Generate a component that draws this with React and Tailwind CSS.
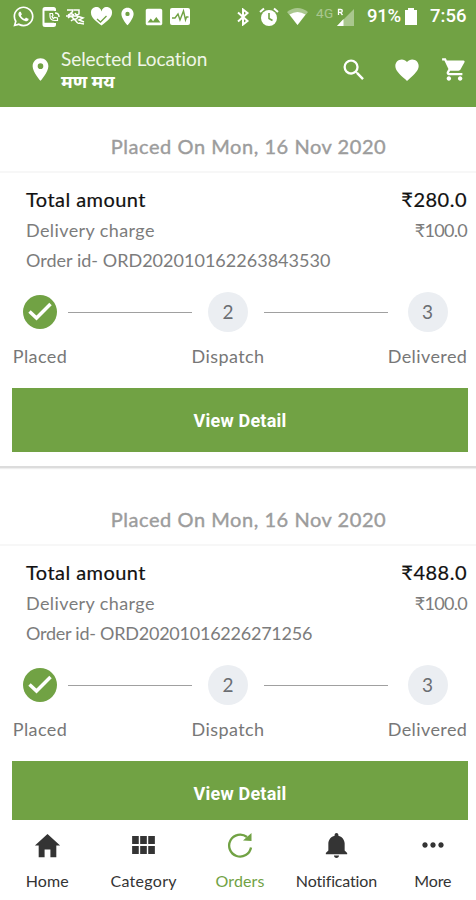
import { Fragment } from "react";
import { FaWhatsapp } from "react-icons/fa";
import { IoMdHome, IoMdNotifications } from "react-icons/io";
import {
  MdFavorite,
  MdImage,
  MdLocationOn,
  MdMoreHoriz,
  MdSearch,
  MdShoppingCart,
} from "react-icons/md";

const orders = [
  {
    id: "ORD202010162263843530",
    date: "Mon, 16 Nov 2020",
    total: "280.0",
    delivery: "100.0",
    idTracking: "tracking-[0.02px]",
  },
  {
    id: "ORD20201016226271256",
    date: "Mon, 16 Nov 2020",
    total: "488.0",
    delivery: "100.0",
    idTracking: "tracking-[-0.24px]",
  },
];

const steps = [
  { label: "Placed", width: "w-[56px]" },
  { label: "Dispatch", width: "w-[72px]" },
  { label: "Delivered", width: "w-[79px]" },
];

const GridIcon = () => (
  <svg width="23" height="18" viewBox="0 0 24 19" fill="currentColor">
    <path d="M0 0h7v8.500H0zM8.500 0h7v8.500h-7zM17 0h7v8.500h-7zM0 10.500h7V19H0zM8.500 10.500h7V19h-7zM17 10.500h7V19h-7z" />
  </svg>
);

const RefreshIcon = () => (
  <svg width="26" height="26" viewBox="0 0 26 26" fill="none">
    <path d="M24 15.500A11 11 0 1 1 20 5" stroke="currentColor" strokeWidth="2.300" />
    <path d="M24.500 1v8l-8.500-.5z" fill="currentColor" />
  </svg>
);

const tabs = [
  { label: "Home", icon: <IoMdHome size={31} />, tracking: "tracking-[0.1px]" },
  { label: "Category", icon: <GridIcon />, tracking: "tracking-[0.3px]" },
  { label: "Orders", icon: <RefreshIcon />, active: true, tracking: "tracking-[0.1px]" },
  { label: "Notification", icon: <IoMdNotifications size={31} />, tracking: "tracking-[-0.15px]" },
  { label: "More", icon: <MdMoreHoriz size={32} />, tracking: "tracking-[-0.1px]" },
];

const StatusBar = () => (
  <div className="flex items-center h-[33px] pl-[12px] pr-[9px] text-white font-[Roboto,sans-serif]">
    <FaWhatsapp size={23} />
    <svg className="ml-[7px]" width="18" height="20" viewBox="0 0 18 20" fill="none" stroke="currentColor">
      <path d="M13 4V2.5Q13 1 11.500 1H3Q1.500 1 1.500 2.500v15Q1.500 19 3 19h8.500Q13 19 13 17.500V16" strokeWidth="2" />
      <path d="M2 2.500h10M2 17h10" strokeWidth="2.500" />
      <path d="M8 6.500v2.500q0 4.500 5 4.500h2.500v-2.500l-3-.5-1 1q-1-.5-1.500-2l1-1-.5-2z" strokeWidth="1.200" />
      <path d="M13 6q4 0 4 4" strokeWidth="1.500" />
    </svg>
    <svg className="ml-[5px]" width="21" height="18" viewBox="0 0 21 18" fill="none" stroke="currentColor" strokeWidth="1.500">
      <path d="M2 2h6q-1 4-5 5M5 5l4 2M9 2h5v4q-3 2-4-1M1 8h12M3 10q3-3 5 0t5-1M12 8l6 2-4 2 5 2M6 13q3-3 5 0t3 2M14 15l5 1" />
    </svg>
    <svg className="ml-[4px]" width="23" height="20" viewBox="0 0 23 20">
      <path
        d="M11.500 18.500C5 13.500 1 10 1 6a5.200 5.200 0 0 1 10.500-1.500A5.200 5.200 0 0 1 22 6c0 4-4 7.500-10.500 12.500z"
        fill="currentColor"
      />
      <path d="M7 12l3.500 3 6-6" fill="none" stroke="#71a244" strokeWidth="1.300" />
    </svg>
    <MdLocationOn className="ml-[4px]" size={21} />
    <MdImage className="ml-[5px]" size={22} />
    <svg className="ml-[5px]" width="20" height="17" viewBox="0 0 20 17">
      <rect width="20" height="17" rx="2" fill="currentColor" />
      <path d="M2 10h3l3-4 2 6 3.500-9 2 9 1-3h2" fill="none" stroke="#71a244" strokeWidth="1.400" />
    </svg>
    <svg className="ml-auto" width="13" height="18" viewBox="0 0 13 18" fill="none" stroke="currentColor" strokeWidth="2">
      <path d="M1 4.500l9.500 8.500L6 16.500v-15L10.500 5 1 13.500" />
    </svg>
    <svg className="ml-[9px]" width="20" height="20" viewBox="0 0 20 20">
      <circle cx="10" cy="11" r="8" fill="currentColor" />
      <path d="M1 5l4-3.500M19 5l-4-3.500" stroke="currentColor" strokeWidth="2" />
      <path d="M10 6v5.500l3.500 2" fill="none" stroke="#71a244" strokeWidth="1.600" />
    </svg>
    <svg className="ml-[8px]" width="21" height="17" viewBox="0 0 21 17" fill="currentColor">
      <path d="M10.500 17L0 4q10.500-8 21 0z" opacity=".4" />
      <path d="M10.500 17L2.500 6.500q8-5 16 0z" />
    </svg>
    <span className="ml-[8px] -mt-[6px] w-[19px] text-[13.500px] leading-none tracking-[0.5px] opacity-40">4G</span>
    <svg className="ml-[1px]" width="18" height="18" viewBox="0 0 18 18">
      <path d="M18 1v17H1z" fill="white" opacity=".4" />
      <path d="M7.500 11v7H1z" fill="white" />
      <path d="M2.500 7V1.500h2.200q1.600 0 1.600 1.400T4.700 4.300H2.500M4.500 4.300L6.500 7" fill="none" stroke="white" strokeWidth="1.300" />
    </svg>
    <span className="ml-[13px] w-[36px] text-[18.500px] font-medium whitespace-nowrap tracking-[-0.300px]">91%</span>
    <svg className="ml-[2px]" width="12" height="17" viewBox="0 0 12 17" fill="currentColor">
      <path d="M0 2h3V0h6v2h3v15H0z" />
    </svg>
    <span className="ml-[13px] w-[37px] text-[18.500px] font-medium whitespace-nowrap">7:56</span>
  </div>
);

const Header = () => (
  <header className="h-[107px] shrink-0 bg-[#71a244] text-white">
    <StatusBar />
    <div className="flex items-center h-[74px] pl-[27px] pr-[9px] pb-px">
      <MdLocationOn size={27} />
      <div className="ml-[7px] pb-[2px]">
        <p className="text-[19px] leading-[24px] tracking-[-0.05px] text-[#f0f6e8]">Selected Location</p>
        <p className="text-[18px] leading-[20px] font-bold">मण मय</p>
      </div>
      <div className="flex items-center ml-auto">
        <MdSearch size={28} />
        <MdFavorite className="ml-[25px]" size={28} />
        <MdShoppingCart className="ml-[20px] -mr-px" size={27} />
      </div>
    </div>
  </header>
);

const StepCircle = ({ index }) => {
  if (index === 0) {
    return (
      <div className="flex items-center justify-center w-[34px] h-[34px] rounded-full bg-[#71a244]">
        <svg width="24" height="20" viewBox="0 0 24 20" fill="none" stroke="white" strokeWidth="3.500">
          <path d="M1.500 9.500l7 6.500L22.500 2" />
        </svg>
      </div>
    );
  }
  return (
    <div className="flex items-center justify-center w-[40px] h-[40px] rounded-full bg-[#ebeef2] text-[19px] text-[#6b6e73]">
      {index + 1}
    </div>
  );
};

const OrderSteps = () => (
  <div className="flex mt-[17px] pl-[12px] pr-[9px]">
    {steps.map((step, index) => (
      <Fragment key={step.label}>
        {index > 0 && <div className="flex-1 h-[1px] mt-[20px] bg-[#a0a0a0]" />}
        <div className={`flex flex-col items-center ${step.width}`}>
          <div className="flex items-center h-[40px]">
            <StepCircle index={index} />
          </div>
          <p className="mt-[12px] text-[18px] leading-[24px] tracking-[0.4px] whitespace-nowrap text-[#777]">
            {step.label}
          </p>
        </div>
      </Fragment>
    ))}
  </div>
);

const OrderCard = ({ order }) => (
  <section className="h-[373px] shrink-0">
    <div className="h-[361px] bg-white border-b-2 border-[#dcdcdc] shadow-[0_1px_1px_#eeeeee]">
      <h2 className="h-[66px] pt-[25px] pl-[21px] text-center text-[20px] leading-[28px] [-webkit-text-stroke:0.4px] tracking-[0.55px] text-[#9c9c9c] border-b-2 border-[#f7f7f7]">
        Placed On {order.date}
      </h2>
      <div className="pt-[12px] pl-[26px] pr-[9px]">
        <div className="flex justify-between text-[20px] leading-[28px] text-[#111] [-webkit-text-stroke:0.2px]">
          <span className="tracking-[0.45px]">Total amount</span>
          <span className="tracking-[0.5px]">₹{order.total}</span>
        </div>
        <div className="flex justify-between mt-[2px] text-[18px] leading-[30px] text-[#7c7c7c]">
          <span className="tracking-[0.4px]">Delivery charge</span>
          <span className="tracking-[-0.7px]">₹{order.delivery}</span>
        </div>
        <p className={`text-[18px] leading-[30px] text-[#7c7c7c] ${order.idTracking}`}>Order id- {order.id}</p>
      </div>
      <OrderSteps />
      <button className="block mt-[20px] ml-[12px] w-[456px] h-[64px] pt-px bg-[#71a244] font-[Roboto,sans-serif] text-[18px] font-bold tracking-[0.2px] text-white">
        View Detail
      </button>
    </div>
  </section>
);

const BottomNav = () => (
  <nav className="flex shrink-0 w-[482px] h-[80px] -ml-px bg-white">
    {tabs.map((tab) => (
      <div
        key={tab.label}
        className={`flex flex-col items-center flex-1 pt-[7px] ${tab.active ? "text-[#71a244]" : "text-[#343434]"}`}
      >
        <div className="flex items-center justify-center h-[36px]">{tab.icon}</div>
        <span className={`mt-[8px] text-[16px] leading-[20px] ${tab.tracking}`}>{tab.label}</span>
      </div>
    ))}
  </nav>
);

const App = () => {
  return (
    <div className="flex flex-col w-[476px] h-[900px] overflow-hidden bg-white font-[Lato,'Noto_Sans',sans-serif]">
      <Header />
      <main className="flex flex-col flex-1 min-h-0 overflow-hidden">
        {orders.map((order) => (
          <OrderCard key={order.id} order={order} />
        ))}
      </main>
      <BottomNav />
    </div>
  );
};

export default App;
